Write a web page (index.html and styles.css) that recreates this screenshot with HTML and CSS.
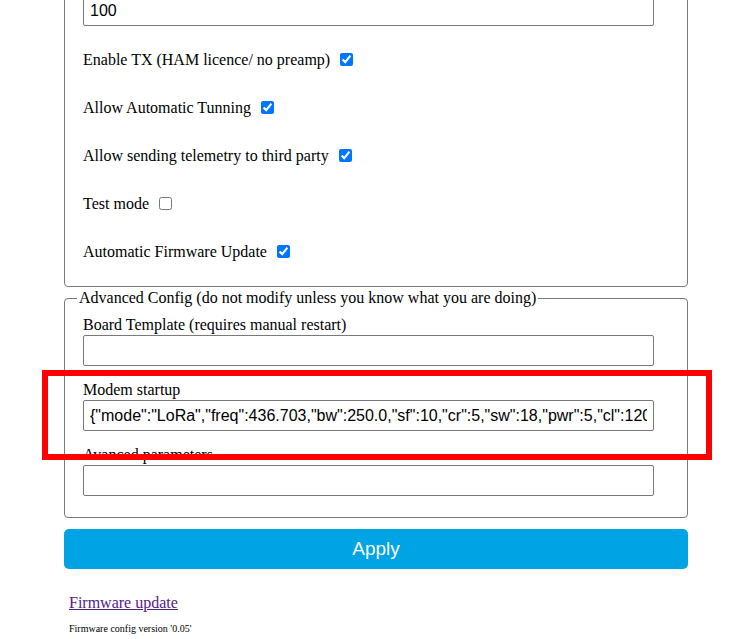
FILE: index.html
```html
<!DOCTYPE html>
<html lang="en">
<head>
  <meta charset="UTF-8">
  <title>TinyGS config</title>
  <link rel="stylesheet" href="styles.css">
</head>
<body>
  <div class="page">
    <form class="config">
      <fieldset class="group">
        <legend>Board config</legend>
        <div class="field">
          <label for="oled">OLED Bright</label>
          <input type="text" id="oled" value="100">
        </div>
        <div class="check-row">
          <label for="tx">Enable TX (HAM licence/ no preamp)</label>
          <input type="checkbox" id="tx" checked>
        </div>
        <div class="check-row">
          <label for="tune">Allow Automatic Tunning</label>
          <input type="checkbox" id="tune" checked>
        </div>
        <div class="check-row">
          <label for="telemetry">Allow sending telemetry to third party</label>
          <input type="checkbox" id="telemetry" checked>
        </div>
        <div class="check-row">
          <label for="test">Test mode</label>
          <input type="checkbox" id="test">
        </div>
        <div class="check-row">
          <label for="autoupdate">Automatic Firmware Update</label>
          <input type="checkbox" id="autoupdate" checked>
        </div>
      </fieldset>

      <fieldset class="group">
        <legend>Advanced Config (do not modify unless you know what you are doing)</legend>
        <div class="field">
          <label for="board">Board Template (requires manual restart)</label>
          <input type="text" id="board" value="">
        </div>
        <div class="field">
          <label for="modem">Modem startup</label>
          <input type="text" id="modem" value='{"mode":"LoRa","freq":436.703,"bw":250.0,"sf":10,"cr":5,"sw":18,"pwr":5,"cl":120,"pl":8,"gain":0,"crc":true,"fldro":1}'>
        </div>
        <div class="field">
          <label for="advanced">Avanced parameters</label>
          <input type="text" id="advanced" value="">
        </div>
      </fieldset>

      <button type="button" class="apply-btn">Apply</button>
    </form>

    <p class="update-link"><a href="#">Firmware update</a></p>
    <p class="version">Firmware config version '0.05'</p>
  </div>

  <div class="highlight"></div>
</body>
</html>
```

FILE: styles.css
```css
body {
  margin: 0;
  font-family: 'Liberation Serif', 'Times New Roman', serif;
  font-size: 16px;
  color: #000;
  background: #fff;
}
.page {
  width: 624px;
  margin-left: 64px;
  margin-top: -51px;
}
.group {
  margin: 0 0 2px 0;
  padding: 0 12px 10px;
  border: 1px solid #7a7a7a;
  border-radius: 4px;
}
.group legend {
  padding: 0 2px;
  line-height: 18px;
}
.field {
  margin: 9px 0 0 6px;
}
.field + .field {
  margin-top: 15px;
}
.field:last-child {
  margin-bottom: 11px;
}
.field label {
  display: block;
  line-height: 18px;
  margin-bottom: 1px;
}
.field input {
  box-sizing: border-box;
  width: 571px;
  height: 31px;
  padding: 0 6px;
  border: 1px solid #7a7a7a;
  border-radius: 2px;
  font-family: 'Liberation Sans', Arial, sans-serif;
  font-size: 16px;
  color: #000;
}
.field + .check-row {
  margin-top: 10px;
}
.check-row {
  margin-left: 6px;
  padding: 14px 0;
  line-height: 20px;
}
.check-row input {
  width: 13px;
  height: 13px;
  margin: 0 0 0 6px;
  vertical-align: -1px;
}
.apply-btn {
  display: block;
  width: 100%;
  height: 40px;
  margin-top: 11px;
  border: none;
  border-radius: 5px;
  background-color: #00a3e3;
  color: #fff;
  font-family: 'Liberation Sans', Arial, sans-serif;
  font-size: 19px;
  cursor: pointer;
}
.update-link {
  margin: 25px 0 0 5px;
  line-height: 18px;
}
.update-link a {
  color: #551a8b;
}
.version {
  margin: 11px 0 0 5px;
  font-size: 10px;
}
.highlight {
  position: absolute;
  left: 42px;
  top: 370px;
  width: 658px;
  height: 78px;
  border: 6px solid #ff0000;
}
```
